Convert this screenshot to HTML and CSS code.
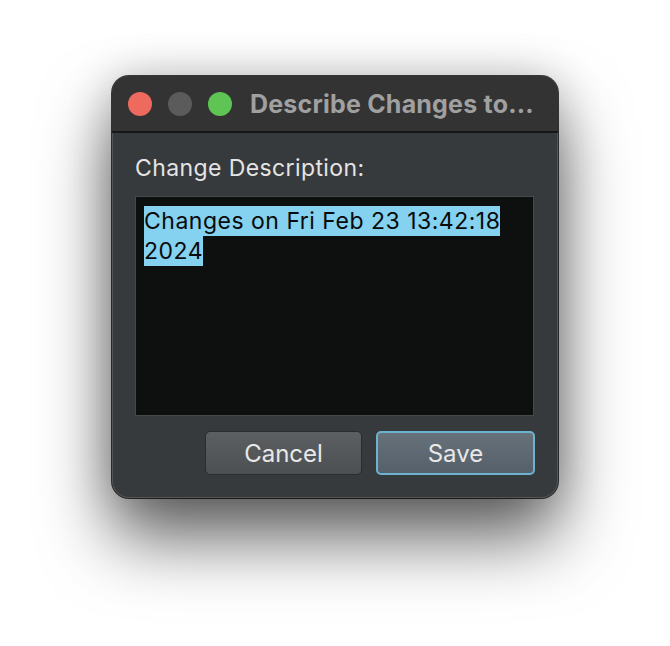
FILE: index.html
```html
<!DOCTYPE html>
<html>
<head>
<meta charset="utf-8">
<link rel="stylesheet" href="styles.css">
</head>
<body>
<div class="stage">
  <div class="window">
    <div class="titlebar">
      <div class="lights">
        <span class="light close"></span>
        <span class="light mini"></span>
        <span class="light zoom"></span>
      </div>
      <div class="title">Describe Changes to...</div>
    </div>
    <div class="content">
      <div class="label">Change Description:</div>
      <div class="textarea"><span class="sel">Changes on Fri Feb 23 13:42:18 2024</span></div>
      <div class="buttons">
        <div class="btn cancel">Cancel</div>
        <div class="btn save">Save</div>
      </div>
    </div>
  </div>
</div>
</body>
</html>
```
FILE: styles.css
```css
html, body {
  margin: 0;
  padding: 0;
  background: #ffffff;
}
body {
  font-family: Inter, "Liberation Sans", sans-serif;
}
.stage {
  width: 670px;
  height: 646px;
  display: flex;
  justify-content: center;
  align-items: flex-start;
  padding-top: 76px;
  box-sizing: border-box;
}
.window {
  width: 446px;
  border-radius: 17px;
  background: #373a3c;
  overflow: hidden;
  box-shadow: 0 0 0 1px rgba(0,0,0,0.75), inset 0 0 0 1px rgba(255,255,255,0.14), 0 40px 70px rgba(0,0,0,0.62), 0 0 45px rgba(0,0,0,0.2);
}
.titlebar {
  height: 55px;
  background: #333333;
  border-bottom: 2px solid #171717;
  display: flex;
  align-items: center;
  padding-left: 16px;
  gap: 18px;
}
.lights {
  display: flex;
  gap: 16px;
}
.light {
  width: 24px;
  height: 24px;
  border-radius: 50%;
  display: block;
}
.close { background: #ee695e; }
.mini { background: #5b5b5b; }
.zoom { background: #5ec454; }
.title {
  color: #a0a0a0;
  font-weight: 700;
  font-size: 25px;
  letter-spacing: 0.2px;
  white-space: nowrap;
}
.content {
  padding: 20px 23px 23px 23px;
}
.label {
  color: #e4e4e4;
  font-size: 23px;
  letter-spacing: 0.4px;
  line-height: 30px;
  margin-bottom: 13px;
}
.textarea {
  width: 399px;
  height: 220px;
  box-sizing: border-box;
  background: #0e1010;
  border: 1px solid #46494b;
  padding: 9px 8px;
  font-size: 23px;
  letter-spacing: 0.5px;
  line-height: 30px;
  color: #0a0a0a;
}
.sel {
  background: #85d1f0;
  padding: 1px 0;
}
.buttons {
  display: flex;
  justify-content: flex-end;
  gap: 14px;
  margin-top: 15px;
}
.btn {
  height: 44px;
  box-sizing: border-box;
  border-radius: 5px;
  display: flex;
  align-items: center;
  justify-content: center;
  color: #e8e8e8;
  font-size: 24px;
}
.cancel {
  width: 157px;
  background: linear-gradient(#5c5f61, #4d5052);
  border: 1px solid #2a2c2e;
}
.save {
  width: 159px;
  background: linear-gradient(#66717a, #55606a);
  border: 2px solid #6cb2d1;
}
```
